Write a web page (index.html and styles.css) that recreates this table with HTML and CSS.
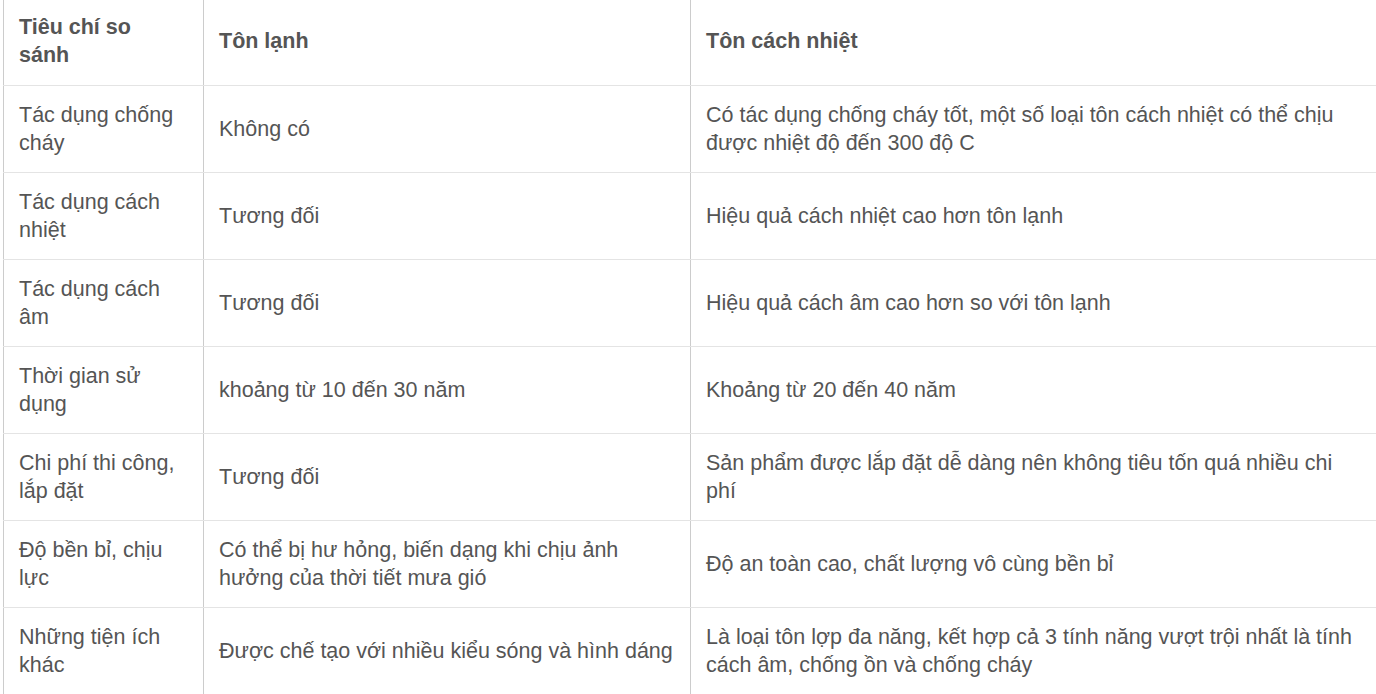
FILE: index.html
```html
<!DOCTYPE html>
<html lang="vi">
<head>
<meta charset="utf-8">
<title>So sánh tôn lạnh và tôn cách nhiệt</title>
<link rel="stylesheet" href="styles.css">
</head>
<body>
<table class="cmp">
  <colgroup>
    <col class="c1">
    <col class="c2">
    <col class="c3">
  </colgroup>
  <thead>
    <tr>
      <th class="crit">Tiêu chí so sánh</th>
      <th>Tôn lạnh</th>
      <th>Tôn cách nhiệt</th>
    </tr>
  </thead>
  <tbody>
    <tr>
      <td>Tác dụng chống cháy</td>
      <td>Không có</td>
      <td>Có tác dụng chống cháy tốt, một số loại tôn cách nhiệt có thể chịu được nhiệt độ đến 300 độ C</td>
    </tr>
    <tr>
      <td>Tác dụng cách nhiệt</td>
      <td>Tương đối</td>
      <td>Hiệu quả cách nhiệt cao hơn tôn lạnh</td>
    </tr>
    <tr>
      <td>Tác dụng cách âm</td>
      <td>Tương đối</td>
      <td>Hiệu quả cách âm cao hơn so với tôn lạnh</td>
    </tr>
    <tr>
      <td>Thời gian sử dụng</td>
      <td>khoảng từ 10 đến 30 năm</td>
      <td>Khoảng từ 20 đến 40 năm</td>
    </tr>
    <tr>
      <td>Chi phí thi công, lắp đặt</td>
      <td>Tương đối</td>
      <td>Sản phẩm được lắp đặt dễ dàng nên không tiêu tốn quá nhiều chi phí</td>
    </tr>
    <tr>
      <td>Độ bền bỉ, chịu lực</td>
      <td>Có thể bị hư hỏng, biến dạng khi chịu ảnh hưởng của thời tiết mưa gió</td>
      <td>Độ an toàn cao, chất lượng vô cùng bền bỉ</td>
    </tr>
    <tr>
      <td>Những tiện ích khác</td>
      <td>Được chế tạo với nhiều kiểu sóng và hình dáng</td>
      <td>Là loại tôn lợp đa năng, kết hợp cả 3 tính năng vượt trội nhất là tính cách âm, chống ồn và chống cháy</td>
    </tr>
  </tbody>
</table>
</body>
</html>
```

FILE: styles.css
```css
html, body {
  margin: 0;
  padding: 0;
  background: #ffffff;
}
body {
  padding-left: 3px;
  font-family: "Liberation Sans", Arial, sans-serif;
  color: #555555;
  overflow: hidden;
}
.cmp {
  border-collapse: collapse;
  table-layout: fixed;
  width: 1373px;
  font-size: 21.5px;
  line-height: 28px;
}
.c1 { width: 200px; }
.c2 { width: 487px; }
.c3 { width: 686px; }
.cmp th,
.cmp td {
  text-align: left;
  vertical-align: middle;
  border-left: 1px solid #cccccc;
  border-right: 1px solid #cccccc;
  border-bottom: 1px solid #e4e4e4;
  padding: 15px;
}
.cmp th {
  font-weight: bold;
  padding-top: 13px;
  padding-bottom: 16px;
}
.cmp th.crit {
  padding-right: 30px;
}
```
